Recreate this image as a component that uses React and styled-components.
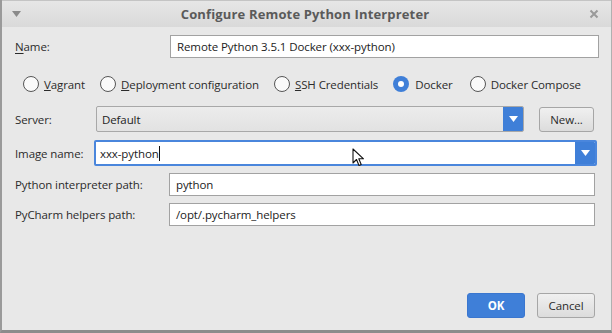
import React from "react";
import styled, { createGlobalStyle } from "styled-components";

const Global = createGlobalStyle`
  html, body { margin: 0; padding: 0; background: #e8e8e8; }
  body { font-family: "Open Sans", "Noto Sans", sans-serif; font-size: 11.5px; letter-spacing: -0.1px; color: #2b2b2b; }
`;

const Window = styled.div`
  position: relative;
  width: 612px;
  height: 333px;
  box-sizing: border-box;
  background: #e8e8e8;
  border-left: 2px solid #9a9a9a;
  border-right: 1px solid #b0b0b0;
  border-bottom: 3px solid #8c8c8c;
  display: flex;
  flex-direction: column;
  overflow: hidden;
`;

const TitleBar = styled.div`
  height: 27px;
  flex: none;
  display: flex;
  align-items: center;
  justify-content: space-between;
  padding: 0 12px 0 10px;
  background: linear-gradient(#e6e6e6, #d9d9d9);
  border-top: 1px solid #c4c4c4;
  box-sizing: border-box;
`;

const Title = styled.div`
  font-weight: 700;
  font-size: 13px;
  letter-spacing: 0.15px;
  color: #5a5a5a;
`;

const Body = styled.div`
  flex: 1;
  display: flex;
  flex-direction: column;
  padding: 8px 12px 12px 13px;
`;

const Row = styled.div`
  display: flex;
  align-items: center;
  height: ${(p) => p.h || 24}px;
  margin-top: ${(p) => p.mt || 0}px;
`;

const Label = styled.div`
  width: ${(p) => p.w}px;
  flex: none;
  color: #2b2b2b;
  u { text-decoration: underline; text-underline-offset: 2px; }
`;

const Input = styled.div`
  flex: 1;
  height: ${(p) => p.h || 23}px;
  box-sizing: border-box;
  background: #fff;
  border: 1px solid #a2a2a2;
  display: flex;
  align-items: center;
  padding-left: 6px;
  margin-right: ${(p) => p.mr || 0}px;
  color: #222;
`;

const Combo = styled.div`
  flex: ${(p) => (p.w ? "none" : "1")};
  width: ${(p) => (p.w ? `${p.w}px` : "auto")};
  height: 26px;
  box-sizing: border-box;
  display: flex;
  align-items: stretch;
  border: ${(p) => (p.focused ? "2px solid #4a86dc" : "1px solid #a8a8a8")};
  border-radius: 2px;
  background: ${(p) => (p.focused ? "#fff" : "linear-gradient(#ececec, #e2e2e2)")};
  margin-right: ${(p) => p.mr || 0}px;
`;

const ComboText = styled.div`
  flex: 1;
  display: flex;
  align-items: center;
  padding-left: ${(p) => p.pl || 5}px;
  color: #222;
`;

const Caret = styled.span`
  display: inline-block;
  width: 1px;
  height: 15px;
  background: #111;
`;

const ArrowBox = styled.div`
  width: ${(p) => p.w || 20}px;
  background: #3f7fd8;
  display: flex;
  align-items: center;
  justify-content: center;
  border-radius: 0 1px 1px 0;
`;

const Button = styled.div`
  width: ${(p) => p.w}px;
  height: 25px;
  box-sizing: border-box;
  border-radius: 3px;
  display: flex;
  align-items: center;
  justify-content: center;
  border: 1px solid ${(p) => (p.primary ? "#3a76cf" : "#a6a6a6")};
  background: ${(p) => (p.primary ? "#3f7fd8" : "linear-gradient(#f0f0f0, #dcdcdc)")};
  color: ${(p) => (p.primary ? "#fff" : "#2b2b2b")};
  font-weight: ${(p) => (p.primary ? 700 : 400)};
  margin-left: ${(p) => p.ml || 0}px;
`;

const RadioRow = styled.div`
  display: flex;
  align-items: center;
  height: 18px;
  margin-top: 17px;
  padding-left: 8px;
`;

const RadioItem = styled.div`
  display: flex;
  align-items: center;
  margin-right: ${(p) => p.mr}px;
`;

const RadioCircle = styled.span`
  width: 16px;
  height: 16px;
  box-sizing: border-box;
  border-radius: 50%;
  border: ${(p) => (p.checked ? "none" : "1px solid #555")};
  background: ${(p) => (p.checked ? "#3f7fd8" : "#fafafa")};
  display: flex;
  align-items: center;
  justify-content: center;
  margin-right: ${(p) => (p.checked ? 6 : 5)}px;
  &::after {
    content: "";
    display: ${(p) => (p.checked ? "block" : "none")};
    width: 6px;
    height: 6px;
    border-radius: 50%;
    background: #fff;
  }
`;

const Footer = styled.div`
  margin-top: auto;
  display: flex;
  justify-content: flex-end;
  padding-right: 4px;
`;

const Cursor = styled.svg`
  position: absolute;
  left: 350px;
  top: 148px;
`;

const Down = () => (
  <svg width="9" height="6" viewBox="0 0 9 6">
    <path d="M0 0 H9 L4.5 6 Z" fill="#fff" />
  </svg>
);

const Radio = ({ checked, label, u, mr }) => (
  <RadioItem mr={mr}>
    <RadioCircle checked={checked} />
    <span>
      {u ? <u>{u}</u> : null}
      {label}
    </span>
  </RadioItem>
);

export default function App() {
  return (
    <>
      <Global />
      <Window>
        <TitleBar>
          <svg width="9" height="6" viewBox="0 0 9 6">
            <path d="M0 0 H9 L4.5 6 Z" fill="#8a8a8a" />
          </svg>
          <Title>Configure Remote Python Interpreter</Title>
          <svg width="10" height="10" viewBox="0 0 10 10">
            <path d="M1.5 1.5 L8.5 8.5 M8.5 1.5 L1.5 8.5" stroke="#9a9a9a" strokeWidth="2" />
          </svg>
        </TitleBar>
        <Body>
          <Row h={23}>
            <Label w={155}>
              <u>N</u>ame:
            </Label>
            <Input>Remote Python 3.5.1 Docker (xxx-python)</Input>
          </Row>
          <RadioRow>
            <Radio label="agrant" u="V" mr={15} />
            <Radio label="eployment configuration" u="D" mr={15} />
            <Radio label="SH Credentials" u="S" mr={15} />
            <Radio checked label="Docker" mr={17} />
            <Radio label="Docker Compose" mr={0} />
          </RadioRow>
          <Row h={26} mt={13}>
            <Label w={81}>Server:</Label>
            <Combo w={428}>
              <ComboText>Default</ComboText>
              <ArrowBox w={20}>
                <Down />
              </ArrowBox>
            </Combo>
            <Button w={55} ml={15}>New...</Button>
          </Row>
          <Row h={26} mt={8}>
            <Label w={79}>Image name:</Label>
            <Combo focused mr={2}>
              <ComboText pl={4}>
                xxx-python
                <Caret />
              </ComboText>
              <ArrowBox w={20}>
                <Down />
              </ArrowBox>
            </Combo>
          </Row>
          <Row h={24} mt={6}>
            <Label w={154}>Python interpreter path:</Label>
            <Input mr={4}>python</Input>
          </Row>
          <Row h={24} mt={6}>
            <Label w={154}>PyCharm helpers path:</Label>
            <Input mr={4}>/opt/.pycharm_helpers</Input>
          </Row>
          <Footer>
            <Button primary w={58}>OK</Button>
            <Button w={58} ml={12}>Cancel</Button>
          </Footer>
        </Body>
        <Cursor width="14" height="20" viewBox="0 0 14 20">
          <path d="M1 1 L1 15 L4.5 11.5 L7 17.5 L9.2 16.5 L6.8 10.8 L11.5 10.8 Z" fill="#fff" stroke="#111" strokeWidth="1.1" strokeLinejoin="round" />
        </Cursor>
      </Window>
    </>
  );
}
